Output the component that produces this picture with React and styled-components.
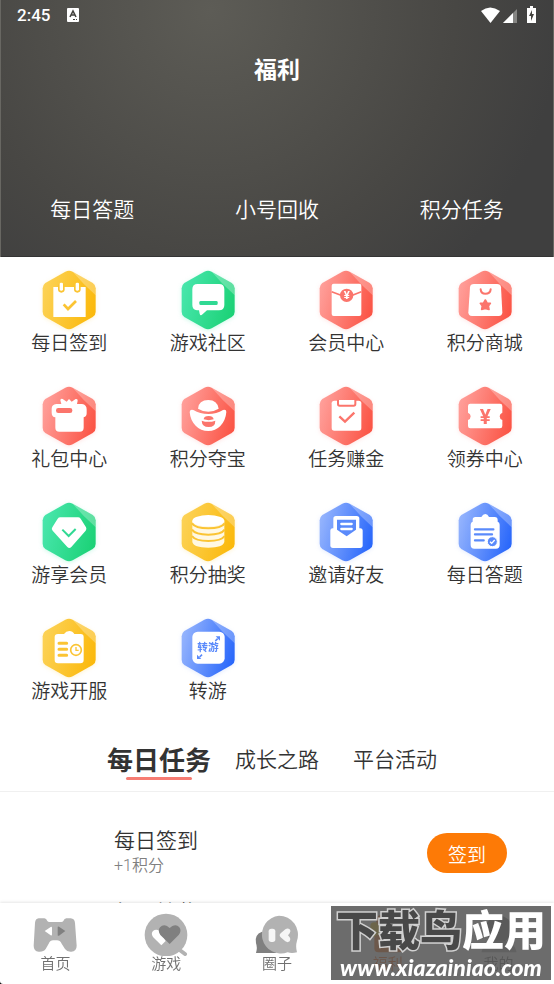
import React, { useState } from "react";
import styled, { createGlobalStyle } from "styled-components";

const palettes = {
  yellow: { from: "#fcd256", to: "#fbb90c", mark: "#fbc433" },
  green: { from: "#48e6ac", to: "#1cd277", mark: "#30d993" },
  red: { from: "#ff9f9a", to: "#fb5546", mark: "#fb756c" },
  blue: { from: "#95b4fd", to: "#2a68fb", mark: "#5a8afb" },
};

const star = "M82 90l5 9 10 1-6 8 2 10-11-3-11 3 2-10-6-8 10-1z";

const glyphs = {
  calendar: (c) => (
    <>
      <path d="M34 51H131V141H34Z" fill="#fff" />
      {[58, 106].map((x) => (
        <g key={x}>
          <rect x={x - 10} y="40" width="20" height="28" rx="10" fill={c} />
          <rect x={x - 5} y="38" width="10" height="24" rx="4" fill="#fff" />
        </g>
      ))}
      <path d="M65 103L78 117L102 93" fill="none" stroke={c} strokeWidth="8" />
    </>
  ),
  chat: (c) => (
    <>
      <path
        d="M50 42H114Q130 42 130 58V105Q130 121 114 121H78L62 135Q57 137 56 131L54 121H48Q34 120 34 105V58Q34 42 50 42Z"
        fill="#fff"
      />
      <rect x="55" y="93" width="55" height="12" rx="4" fill={c} />
    </>
  ),
  packet: (c) => (
    <>
      <rect x="38" y="41" width="89" height="97" rx="6" fill="#fff" />
      <path d="M38 65L66 76M127 65L100 76" stroke={c} strokeWidth="5" />
      <circle cx="83" cy="76" r="20" fill={c} />
      <Mark x="83" y="88" $size={34} fill="#fff">¥</Mark>
    </>
  ),
  bag: (c) => (
    <>
      <path
        d="M48 42H117Q128 42 129 52L133 127Q133 138 122 138H42Q31 138 31 127L36 52Q37 42 48 42Z"
        fill="#fff"
      />
      <path d="M68 58Q69 71 82 71Q97 71 98 58" fill="none" stroke={c} strokeWidth="6" strokeLinecap="round" />
      <path d={star} fill={c} stroke={c} strokeWidth="5" strokeLinejoin="round" />
    </>
  ),
  gift: (c) => (
    <>
      <path
        d="M43 54H58L55 43Q55 37 62 39L74 47L81 39L89 47L101 39Q108 38 107 44L105 54H120Q134 56 134 70V82Q134 92 125 94V125Q125 137 113 137H52Q40 137 40 125V94Q29 92 29 80V68Q29 56 43 54Z"
        fill="#fff"
      />
      <rect x="42" y="66" width="49" height="15" rx="7" fill={c} />
    </>
  ),
  ingot: (c) => (
    <>
      <path d="M51 68Q53 42 82 42Q109 42 113 68Q98 77 82 77Q65 77 51 68Z" fill="#fff" />
      <path d="M37 72Q57 84 82 84Q107 84 126 72Q136 69 136 78Q134 103 118 120Q103 135 82 135Q59 135 44 119Q28 103 26 78Q27 69 37 72Z" fill="#fff" />
      <path d="M68 100Q69 90 83 90Q96 90 98 100Q83 105 68 100Z" fill={c} />
      <path d="M62 104Q82 111 103 104Q103 123 83 123Q63 123 62 104Z" fill={c} />
    </>
  ),
  tasks: (c) => (
    <>
      <rect x="38" y="44" width="89" height="90" rx="8" fill="#fff" />
      <path d="M57 42V54Q57 59 62 59H104Q109 59 109 54V42" fill="#fff" stroke={c} strokeWidth="6" />
      <path d="M61 91L78 107L106 80" fill="none" stroke={c} strokeWidth="7" />
    </>
  ),
  coupon: (c) => (
    <>
      <path
        d="M37 53H126Q133 53 133 60V80Q125 83 125 91Q125 99 133 102V120Q133 127 126 127H37Q30 127 30 120V102Q38 99 38 91Q38 83 30 80V60Q30 53 37 53Z"
        fill="#fff"
      />
      <Mark x="82" y="113" $size={62} fill={c}>¥</Mark>
    </>
  ),
  diamond: (c) => (
    <>
      <path d="M55 46H108Q113 46 116 50L132 76Q135 81 131 86L88 135Q82 141 76 135L32 86Q27 81 31 76L47 50Q50 46 55 46Z" fill="#fff" />
      <path d="M61 83L80 102L101 81" fill="none" stroke={c} strokeWidth="6" />
    </>
  ),
  coins: (c) => (
    <>
      <path d="M34 56V120Q38 137 82 137Q126 137 130 120V56Z" fill="#fff8e3" />
      <ellipse cx="82" cy="56" rx="48" ry="17" fill="#fff" />
      {[64, 83, 102].map((y) => (
        <path key={y} d={`M33 ${y}Q43 ${y + 15} 82 ${y + 15}Q121 ${y + 15} 131 ${y}`} fill="none" stroke={c} strokeWidth="6" />
      ))}
    </>
  ),
  letter: (c) => (
    <>
      <rect x="43" y="42" width="78" height="60" rx="8" fill="#fff" />
      <path d="M41 79H124Q131 79 131 87V130Q131 138 123 138H42Q34 138 34 130V87Q34 79 41 79Z" fill="#fff" />
      <path d="M54 53H111V83L83 103L54 83Z" fill={c} />
      <path d="M67 66H98M67 81H98" stroke="#fff" strokeWidth="7" strokeLinecap="round" />
    </>
  ),
  quiz: (c) => (
    <>
      <path
        d="M52 45H70Q75 36 82 36Q89 36 93 45H110Q119 45 119 54V59Q125 61 125 68V129Q125 140 114 140H49Q38 140 38 129V68Q38 61 44 59V53Q44 45 52 45Z"
        fill="#fff"
      />
      <path d="M51 82H106M51 97H102M51 115H77" stroke={c} strokeWidth="7" strokeLinecap="round" />
      <circle cx="103" cy="119" r="15" fill={c} stroke="#fff" strokeWidth="3" />
      <path d="M96 119L101 124L110 114" fill="none" stroke="#fff" strokeWidth="4" />
    </>
  ),
  schedule: (c) => (
    <>
      <path
        d="M48 48H66Q72 39 82 39Q92 39 97 48H116Q125 48 125 57V126Q125 136 115 136H48Q38 136 38 126V57Q38 48 48 48Z"
        fill="#fff"
      />
      <path d="M51 76H74M51 94H74M51 112H74" stroke={c} strokeWidth="9" strokeLinecap="round" />
      <circle cx="102" cy="96" r="16" fill="#fff" stroke={c} strokeWidth="5" />
      <path d="M102 87V97H110" fill="none" stroke={c} strokeWidth="4" />
    </>
  ),
  transfer: (c) => (
    <>
      <rect x="34" y="41" width="97" height="96" rx="16" fill="#fff" />
      <Mark x="81" y="100" $size={32} fill={c}>转游</Mark>
      <path d="M103 69L110 62M63 110L56 117" fill="none" stroke={c} strokeWidth="5" />
      <path d="M104 55H117V68ZM48 110V123H61Z" fill={c} />
    </>
  ),
};

const services = [
  { name: "每日签到", tone: "yellow", glyph: "calendar" },
  { name: "游戏社区", tone: "green", glyph: "chat" },
  { name: "会员中心", tone: "red", glyph: "packet" },
  { name: "积分商城", tone: "red", glyph: "bag" },
  { name: "礼包中心", tone: "red", glyph: "gift" },
  { name: "积分夺宝", tone: "red", glyph: "ingot" },
  { name: "任务赚金", tone: "red", glyph: "tasks" },
  { name: "领券中心", tone: "red", glyph: "coupon" },
  { name: "游享会员", tone: "green", glyph: "diamond" },
  { name: "积分抽奖", tone: "yellow", glyph: "coins" },
  { name: "邀请好友", tone: "blue", glyph: "letter" },
  { name: "每日答题", tone: "blue", glyph: "quiz" },
  { name: "游戏开服", tone: "yellow", glyph: "schedule" },
  { name: "转游", tone: "blue", glyph: "transfer" },
];

const quickLinks = ["每日答题", "小号回收", "积分任务"];
const tabs = ["每日任务", "成长之路", "平台活动"];
const tasks = [
  { title: "每日签到", reward: "+1积分", action: "签到" },
  { title: "每日抽奖", reward: "+1积分", action: "抽奖" },
];

const heart = "M80 93L52 66Q43 53 51 43Q60 33 72 39L80 45L88 39Q101 33 109 43Q117 54 107 66Z";

const navItems = [
  {
    name: "首页",
    icon: (
      <>
        <path
          d="M20 16H37Q43 17 46 24Q48 27 52 27H88Q92 27 94 24Q97 17 103 16H116Q128 17 129 30L134 98Q134 115 118 116Q105 117 99 108L89 92Q84 82 75 82H63Q55 82 50 92L41 108Q35 117 20 116Q5 114 5 98L9 30Q10 17 20 16Z"
          fill="#b2b2b2"
        />
        <path d="M38 54L56 42Q60 40 60 45V64Q60 69 56 67Z" fill="#fff" />
        <path d="M100 54L81 41Q77 39 77 44V65Q77 70 81 68Z" fill="#808080" />
      </>
    ),
  },
  {
    name: "游戏",
    icon: (
      <>
        <path d="M106 108L126 123" stroke="#b2b2b2" strokeWidth="12" strokeLinecap="round" />
        <circle cx="69" cy="66" r="64" fill="#b2b2b2" />
        <path d="M55 97L30 72Q23 61 30 54Q38 47 50 53L68 84Z" fill="#fff" />
        <path d={heart} fill="#808080" />
      </>
    ),
  },
  {
    name: "圈子",
    icon: (
      <>
        <path d="M24 56Q0 65 6 91Q11 104 6 120H66V70Z" fill="#808080" />
        <path d="M75 8A57 57 0 0 1 129 83Q124 100 129 118Q113 122 101 118A57 57 0 1 1 75 8Z" fill="#b2b2b2" />
        <rect x="44" y="47" width="20" height="40" rx="8" fill="#f6f6f6" />
        <path d="M80 61L94 49Q101 44 107 49Q112 54 107 61L102 67L107 73Q112 80 107 85Q101 90 94 85L80 73Q74 67 80 61Z" fill="#f6f6f6" />
      </>
    ),
  },
  {
    name: "福利",
    color: "#ff6a1c",
    icon: (
      <>
        <rect x="16" y="28" width="106" height="44" rx="12" fill="#ffd21f" />
        <rect x="28" y="66" width="86" height="52" rx="12" fill="#ff7a24" />
        <circle cx="50" cy="22" r="17" fill="#ff7a24" />
        <circle cx="88" cy="22" r="17" fill="#ff7a24" />
      </>
    ),
  },
  {
    name: "我的",
    icon: (
      <>
        <circle cx="69" cy="48" r="40" fill="#888" />
        <path d="M16 118Q24 82 69 82Q114 82 122 118Z" fill="#b2b2b2" />
      </>
    ),
  },
];

function HexIcon({ tone, glyph, id }) {
  const { from, to, mark } = palettes[tone];

  return (
    <HexSvg viewBox="0 0 162 180" aria-hidden="true" $glow={from}>
      <defs>
        <linearGradient id={id} x1="0" y1="0.3" x2="1" y2="0.6">
          <stop offset="0" stopColor={from} />
          <stop offset="1" stopColor={to} />
        </linearGradient>
      </defs>
      <path
        d="M70 5Q81 -1 92 5L152 39Q161 45 161 55V125Q161 135 152 141L92 175Q81 181 70 175L10 141Q2 135 2 125V55Q2 45 10 39Z"
        fill={`url(#${id})`}
      />
      <path d="M92 5L152 39Q161 45 161 55V76Q126 45 92 5Z" fill="#fff" fillOpacity="0.28" />
      {glyphs[glyph](mark)}
    </HexSvg>
  );
}

export default function App() {
  const [activeTab, setActiveTab] = useState(tabs[0]);

  return (
    <Screen>
      <GlobalStyle />
      <Content>
        <Header>
          <StatusBar>
            <Time>2:45</Time>
            <svg width="12" height="14" viewBox="0 0 12 14" aria-hidden="true">
              <rect width="12" height="14" rx="1" fill="#fff" />
              <path d="M3 9L6 3L9 9M4 7H8" fill="none" stroke="#44433f" strokeWidth="1.6" />
              <path d="M6 11.5H10" stroke="#44433f" strokeDasharray="2 1" />
            </svg>
            <StatusIcons viewBox="0 0 56 18" aria-hidden="true">
              <path d="M0 5Q9-2 19 5L9.500 17Z" fill="#fff" />
              <path d="M36 3V17H22Z" fill="#858583" />
              <path d="M32 7V17H22Z" fill="#fff" />
              <path d="M46 2H49V0H52V2H55V17H46Z" fill="#fff" />
              <path d="M51 4L48 10H50V15L53 8H51Z" fill="#44433f" />
            </StatusIcons>
          </StatusBar>
          <Title>福利</Title>
          <QuickLinks>
            {quickLinks.map((name) => (
              <QuickLink href="#" key={name}>{name}</QuickLink>
            ))}
          </QuickLinks>
        </Header>

        <ServiceGrid>
          {services.map(({ name, tone, glyph }) => (
            <Service href="#" key={name}>
              <HexIcon tone={tone} glyph={glyph} id={`hex-${glyph}`} />
              {name}
            </Service>
          ))}
        </ServiceGrid>

        <TabBar>
          {tabs.map((name) => (
            <Tab key={name} $active={name === activeTab} onClick={() => setActiveTab(name)}>
              {name}
            </Tab>
          ))}
        </TabBar>

        <TaskList>
          {tasks.map(({ title, reward, action }) => (
            <Task key={title}>
              <div>
                <TaskTitle>{title}</TaskTitle>
                <Reward>{reward}</Reward>
              </div>
              <ActionBtn>{action}</ActionBtn>
            </Task>
          ))}
        </TaskList>
      </Content>

      <BottomNav>
        {navItems.map(({ name, icon, color }) => (
          <NavItem href="#" key={name} $color={color}>
            <NavSvg viewBox="0 0 138 129" aria-hidden="true">{icon}</NavSvg>
            {name}
          </NavItem>
        ))}
        <Watermark>
          <Brand>
            <BrandDark>下载鸟</BrandDark>应用
          </Brand>
          <Site>www.xiazainiao.com</Site>
        </Watermark>
      </BottomNav>
    </Screen>
  );
}

const GlobalStyle = createGlobalStyle`
  * {
    box-sizing: border-box;
  }
  body {
    margin: 0;
    background: #000;
    font-family: Roboto, "Noto Sans CJK SC", sans-serif;
    font-weight: 350;
    color: #333;
  }
  a {
    color: inherit;
    text-decoration: none;
  }
  button {
    border: none;
    padding: 0;
    background: none;
    font-family: inherit;
    font-weight: inherit;
    color: inherit;
    cursor: pointer;
  }
`;

const Screen = styled.div`
  height: 100vh;
  display: flex;
  flex-direction: column;
`;

const Content = styled.main`
  flex: 1;
  min-height: 0;
  overflow-y: auto;
  scrollbar-width: none;
  background: #fff;
`;

const Header = styled.header`
  padding-bottom: 15px;
  color: #fff;
  background: radial-gradient(circle 350px at 38% 10px, #5d5c56, #484744 70%, #3f3f3f);
  box-shadow: inset 1px 0 #686762, inset -1px 0 #686762, inset 0 -1px #343434;
`;

const StatusBar = styled.div`
  height: 30px;
  padding: 0 17px;
  display: flex;
  align-items: center;
  gap: 17px;
`;

const Time = styled.span`
  font-size: 17px;
  font-weight: 500;
`;

const StatusIcons = styled.svg`
  width: 56px;
  height: 18px;
  margin-left: auto;
`;

const Title = styled.h1`
  margin: 0;
  font-size: 23px;
  font-weight: bold;
  line-height: 82px;
  text-align: center;
`;

const QuickLinks = styled.nav`
  margin-top: 66px;
  display: grid;
  grid-template-columns: repeat(3, 1fr);
`;

const QuickLink = styled.a`
  font-size: 21px;
  line-height: 64px;
  text-align: center;
`;

const ServiceGrid = styled.section`
  padding-top: 13px;
  display: grid;
  grid-template-columns: repeat(4, 1fr);
  row-gap: 28px;
`;

const Service = styled.a`
  display: flex;
  flex-direction: column;
  align-items: center;
  font-size: 19px;
  line-height: 28px;
  color: #333;
`;

const HexSvg = styled.svg`
  width: 54px;
  height: 60px;
  overflow: visible;
  filter: drop-shadow(0 1px 2px ${({ $glow }) => $glow}44);
`;

const Mark = styled.text`
  font-family: Roboto, "Noto Sans CJK SC", sans-serif;
  font-size: ${({ $size }) => $size}px;
  font-weight: bold;
  text-anchor: middle;
`;

const TabBar = styled.div`
  height: 64px;
  margin-top: 22px;
  display: flex;
  justify-content: center;
  border-bottom: 1px solid #f0f0f0;
`;

const Tab = styled.button`
  position: relative;
  width: 118px;
  padding-bottom: 3px;
  font-size: ${({ $active }) => ($active ? 26 : 21)}px;
  font-weight: ${({ $active }) => ($active ? "bold" : "inherit")};

  &::after {
    content: "";
    display: ${({ $active }) => ($active ? "block" : "none")};
    position: absolute;
    left: 26px;
    right: 26px;
    bottom: 11px;
    height: 3px;
    border-radius: 2px;
    background: #f67c72;
  }
`;

const TaskList = styled.ul`
  margin: 0;
  padding: 36px 47px 20px 114px;
  display: flex;
  flex-direction: column;
  gap: 22px;
  list-style: none;
`;

const Task = styled.li`
  display: flex;
  align-items: center;
  justify-content: space-between;
`;

const TaskTitle = styled.div`
  font-size: 21px;
  line-height: 26px;
`;

const Reward = styled.div`
  font-size: 16px;
  line-height: 24px;
  color: #808080;
`;

const ActionBtn = styled.button`
  width: 80px;
  height: 40px;
  border-radius: 20px;
  background: #fd7a06;
  color: #fff;
  font-size: 19px;
`;

const BottomNav = styled.nav`
  position: relative;
  padding: 10px 0 11px;
  display: grid;
  grid-template-columns: repeat(5, 1fr);
  background: #fff;
  border-bottom-left-radius: 3px;
  box-shadow: 0 -1px 3px rgba(0, 0, 0, 0.1);
`;

const NavItem = styled.a`
  display: flex;
  flex-direction: column;
  align-items: center;
  font-size: 15px;
  line-height: 17px;
  color: ${({ $color }) => $color || "#707070"};
`;

const NavSvg = styled.svg`
  width: 46px;
  height: 43px;
`;

const Watermark = styled.div`
  position: absolute;
  right: 3px;
  bottom: 4px;
  width: 220px;
  height: 74px;
  display: flex;
  flex-direction: column;
  align-items: center;
  justify-content: flex-end;
  background: rgba(82, 82, 82, 0.85);
  color: #fff;
  white-space: nowrap;
`;

const Brand = styled.div`
  font-size: 42px;
  font-weight: 900;
  line-height: 44px;
`;

const BrandDark = styled.span`
  color: #484848;
  -webkit-text-stroke: 3px #d0d0d0;
  paint-order: stroke fill;
`;

const Site = styled.div`
  font-family: Lato, sans-serif;
  font-size: 23px;
  font-style: italic;
  font-weight: 900;
  line-height: 26px;
`;
